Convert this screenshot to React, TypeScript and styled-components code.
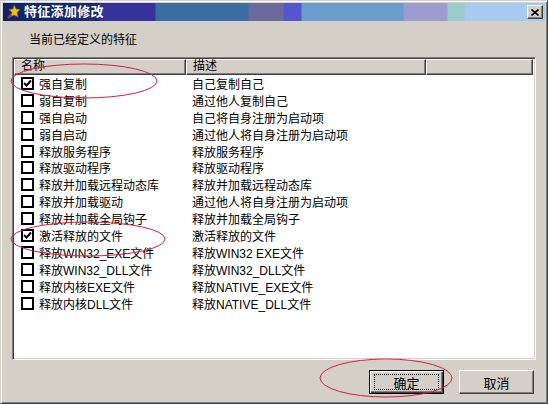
import React from "react";
import styled, { createGlobalStyle } from "styled-components";

const GlobalStyle = createGlobalStyle`
  html, body {
    margin: 0;
    padding: 0;
    background: #d4d0c8;
  }
  * {
    box-sizing: border-box;
  }
`;

const FONT = `"Liberation Sans", "Noto Sans CJK SC", sans-serif`;

interface Feature {
  name: string;
  desc: string;
  checked?: boolean;
}

const features: Feature[] = [
  { name: "强自复制", desc: "自己复制自己", checked: true },
  { name: "弱自复制", desc: "通过他人复制自己" },
  { name: "强自启动", desc: "自己将自身注册为启动项" },
  { name: "弱自启动", desc: "通过他人将自身注册为启动项" },
  { name: "释放服务程序", desc: "释放服务程序" },
  { name: "释放驱动程序", desc: "释放驱动程序" },
  { name: "释放并加载远程动态库", desc: "释放并加载远程动态库" },
  { name: "释放并加载驱动", desc: "通过他人将自身注册为启动项" },
  { name: "释放并加载全局钩子", desc: "释放并加载全局钩子" },
  { name: "激活释放的文件", desc: "激活释放的文件", checked: true },
  { name: "释放WIN32_EXE文件", desc: "释放WIN32 EXE文件" },
  { name: "释放WIN32_DLL文件", desc: "释放WIN32_DLL文件" },
  { name: "释放内核EXE文件", desc: "释放NATIVE_EXE文件" },
  { name: "释放内核DLL文件", desc: "释放NATIVE_DLL文件" },
];

export default function App() {
  return (
    <>
      <GlobalStyle />
      <Window>
        <TitleBar>
          <AppIcon viewBox="0 0 16 16" width="16" height="16">
            <path d="M2 13 L6 9 L8 11 L4 15 Z" fill="#c02020" />
            <path d="M3 14 L5 12" stroke="#3050c0" strokeWidth="1.5" />
            <path
              d="M9 1 L11 5 L15 5.5 L12 8.5 L13 13 L9 11 L6 12.5 L7 8.5 L4 5.5 L8 5 Z"
              fill="#f4c400"
              stroke="#8a6a00"
              strokeWidth="0.6"
            />
          </AppIcon>
          <Title>特征添加修改</Title>
          <CloseButton>
            <svg viewBox="0 0 8 7" width="8" height="7">
              <path d="M0.5 0.5 L7.5 6.5 M7.5 0.5 L0.5 6.5" stroke="#000" strokeWidth="1.6" />
            </svg>
          </CloseButton>
        </TitleBar>

        <Content>
          <GroupLabel>当前已经定义的特征</GroupLabel>
          <ListBox>
            <HeaderRow>
              <HeaderCell $width={172}>名称</HeaderCell>
              <HeaderCell $width={240}>描述</HeaderCell>
              <HeaderCell $width={107} />
            </HeaderRow>
            <Rows>
              {features.map((f) => (
                <Row key={f.name}>
                  <NameCell>
                    <CheckBox>
                      {f.checked && (
                        <svg viewBox="0 0 9 9" width="9" height="9">
                          <path d="M1 4 L3.5 6.5 L8 1.5" stroke="#000" strokeWidth="2" fill="none" />
                        </svg>
                      )}
                    </CheckBox>
                    {f.name}
                  </NameCell>
                  <DescCell>{f.desc}</DescCell>
                </Row>
              ))}
            </Rows>
          </ListBox>

          <ButtonBar>
            <Button $default>
              <FocusRect>确定</FocusRect>
            </Button>
            <Button>取消</Button>
          </ButtonBar>
        </Content>

        <Annotations viewBox="0 0 548 404" width="548" height="404">
          <ellipse cx="84" cy="81" rx="73" ry="17" />
          <ellipse cx="88" cy="239" rx="77" ry="17" />
          <ellipse cx="386" cy="378" rx="66" ry="19" />
        </Annotations>
      </Window>
    </>
  );
}

const Window = styled.div`
  position: relative;
  width: 548px;
  height: 404px;
  display: flex;
  flex-direction: column;
  background: #d4d0c8;
  border: 1px solid;
  border-color: #d4d0c8 #404040 #404040 #d4d0c8;
  box-shadow: inset 1px 1px 0 #ffffff, inset -1px -1px 0 #808080;
  padding: 2px;
  font-family: ${FONT};
`;

const TitleBar = styled.div`
  height: 18px;
  display: flex;
  align-items: center;
  padding: 0 2px 0 2px;
  background: linear-gradient(
    to right,
    #0a246a 0px,
    #1a2a78 96px,
    #35339a 97px,
    #35339a 152px,
    #3a6ea2 153px,
    #3a6ea2 245px,
    #6a6a9c 246px,
    #6a6a9c 280px,
    #5656cc 281px,
    #5656cc 298px,
    #6a9cce 299px,
    #6a9cce 400px,
    #9c9cce 401px,
    #9c9cce 444px,
    #99cccc 445px,
    #99cccc 461px,
    #a6caf0 462px
  );
`;

const AppIcon = styled.svg`
  flex: none;
  margin-right: 3px;
`;

const Title = styled.span`
  flex: 1;
  color: #ffffff;
  font-weight: bold;
  font-size: 13px;
  letter-spacing: 0.3px;
  line-height: 18px;
`;

const CloseButton = styled.div`
  width: 16px;
  height: 14px;
  display: flex;
  align-items: center;
  justify-content: center;
  background: #d4d0c8;
  border: 1px solid;
  border-color: #ffffff #404040 #404040 #ffffff;
  box-shadow: inset -1px -1px 0 #808080;
`;

const Content = styled.div`
  flex: 1;
  display: flex;
  flex-direction: column;
  padding: 11px 9px 0 9px;
`;

const GroupLabel = styled.div`
  font-size: 12px;
  line-height: 16px;
  padding-left: 17px;
  color: #000;
  margin-bottom: 9px;
`;

const ListBox = styled.div`
  width: 524px;
  height: 303px;
  display: flex;
  flex-direction: column;
  background: #ffffff;
  border: 1px solid;
  border-color: #808080 #ffffff #ffffff #808080;
  box-shadow: inset 1px 1px 0 #404040, inset -1px -1px 0 #d4d0c8;
  padding: 1px;
  overflow: hidden;
`;

const HeaderRow = styled.div`
  display: flex;
  height: 16px;
  flex: none;
`;

const HeaderCell = styled.div<{ $width: number }>`
  width: ${({ $width }) => $width}px;
  flex: none;
  background: #d4d0c8;
  border: 1px solid;
  border-color: #ffffff #404040 #404040 #ffffff;
  box-shadow: inset -1px -1px 0 #808080;
  font-size: 12px;
  line-height: 13px;
  padding-left: 6px;
  color: #000;
`;

const Rows = styled.div`
  display: flex;
  flex-direction: column;
`;

const Row = styled.div`
  display: flex;
  height: 16.9px;
  flex: none;
  align-items: center;
  font-size: 12px;
  color: #000;
`;

const NameCell = styled.div`
  width: 172px;
  display: flex;
  align-items: center;
  gap: 5px;
  padding-left: 7px;
  white-space: nowrap;
`;

const DescCell = styled.div`
  padding-left: 6px;
  white-space: nowrap;
`;

const CheckBox = styled.span`
  width: 13px;
  height: 13px;
  flex: none;
  border: 2px solid #000;
  background: #ffffff;
  display: flex;
  align-items: center;
  justify-content: center;
`;

const ButtonBar = styled.div`
  display: flex;
  justify-content: flex-end;
  gap: 15px;
  padding: 10px 2px 0 0;
`;

const Button = styled.div<{ $default?: boolean }>`
  width: 75px;
  height: 24px;
  display: flex;
  align-items: center;
  justify-content: center;
  background: #d4d0c8;
  font-size: 13px;
  color: #000;
  border: 1px solid;
  border-color: ${({ $default }) =>
    $default ? "#000000" : "#ffffff #404040 #404040 #ffffff"};
  box-shadow: ${({ $default }) =>
    $default
      ? "inset 1px 1px 0 #ffffff, inset -1px -1px 0 #404040, inset -2px -2px 0 #808080"
      : "inset -1px -1px 0 #808080"};
`;

const FocusRect = styled.span`
  width: 65px;
  height: 16px;
  display: flex;
  align-items: center;
  justify-content: center;
  border: 1px dotted #000;
`;

const Annotations = styled.svg`
  position: absolute;
  left: -1px;
  top: -1px;
  pointer-events: none;

  ellipse {
    fill: none;
    stroke: #d02040;
    stroke-width: 1;
  }
`;
